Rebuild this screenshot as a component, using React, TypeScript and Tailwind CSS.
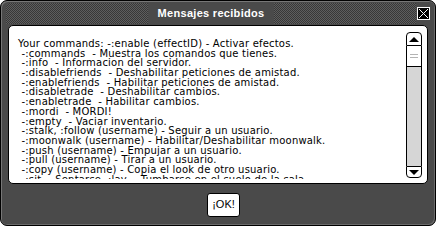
import type { ReactNode } from 'react'

const lines = [
  'Your commands: -:enable (effectID) - Activar efectos.',
  ' -:commands  - Muestra los comandos que tienes.',
  ' -:info  - Informacion del servidor.',
  ' -:disablefriends  - Deshabilitar peticiones de amistad.',
  ' -:enablefriends  - Habilitar peticiones de amistad.',
  ' -:disabletrade  - Deshabilitar cambios.',
  ' -:enabletrade  - Habilitar cambios.',
  ' -:mordi  - MORDI!',
  ' -:empty  - Vaciar inventario.',
  ' -:stalk, :follow (username) - Seguir a un usuario.',
  ' -:moonwalk (username) - Habilitar/Deshabilitar moonwalk.',
  ' -:push (username) - Empujar a un usuario.',
  ' -:pull (username) - Tirar a un usuario.',
  ' -:copy (username) - Copia el look de otro usuario.',
  ' -:sit  - Sentarse, :lay  - Tumbarse en el suelo de la sala.',
]

function ScrollButton({ children, top }: { children: ReactNode; top?: boolean }) {
  return (
    <div
      className={
        top
          ? 'flex h-[14px] items-center justify-center rounded-t-[4px] border border-black bg-white'
          : 'flex h-[12px] items-center justify-center rounded-b-[4px] border border-black bg-white'
      }
    >
      {children}
    </div>
  )
}

function Scrollbar() {
  return (
    <div className="mt-[6px] mb-[5px] mr-[5px] flex w-[16px] shrink-0 flex-col">
      <ScrollButton top>
        <div className="h-0 w-0 border-x-[5px] border-b-[5px] border-x-transparent border-b-black" />
      </ScrollButton>
      <div className="flex h-[20px] flex-col items-center justify-center gap-[2px] border-x border-black bg-white">
        <div className="h-px w-[8px] bg-[#b4b4b4]" />
        <div className="h-px w-[8px] bg-[#b4b4b4]" />
      </div>
      <div className="flex-1 border-x border-t border-black bg-[#d6d6d6]" />
      <ScrollButton>
        <div className="h-0 w-0 border-x-[5px] border-t-[5px] border-x-transparent border-t-black" />
      </ScrollButton>
    </div>
  )
}

export default function App() {
  return (
    <div className="h-[227px] w-[436px] bg-white font-['Liberation_Sans',Arial,sans-serif]">
      <div className="flex h-[226px] flex-col rounded-[7px] border border-black bg-[#4a4a4a] shadow-[inset_1px_1px_0_#777,inset_-1px_-1px_0_#6a6a6a]">
        <div className="mx-[5px] mt-[2px] flex h-[21px] items-center">
          <div className="h-full flex-1 rounded-tl-[5px] bg-[repeating-conic-gradient(#383838_0_25%,#5e5e5e_0_50%)] bg-[length:2px_2px]" />
          <div className="flex h-full items-center bg-[#4a4a4a] px-[10px] text-[11px] font-bold leading-none tracking-[0.3px] text-white">
            Mensajes recibidos
          </div>
          <div className="h-full flex-1 bg-[repeating-conic-gradient(#383838_0_25%,#5e5e5e_0_50%)] bg-[length:2px_2px]" />
          <div className="ml-[1px] flex h-[13px] w-[13px] items-center justify-center border border-white bg-black">
            <svg width="11" height="11" viewBox="0 0 11 11">
              <path d="M1 1 L10 10 M10 1 L1 10" stroke="white" strokeWidth="1" />
            </svg>
          </div>
        </div>
        <div className="mx-[7px] mt-px flex h-[159px] overflow-hidden rounded-[5px] border border-black bg-white">
          <div className="h-[153px] flex-1 self-start overflow-hidden pl-[9px] pt-[13px] font-['DejaVu_Sans',sans-serif] text-[10px] leading-[9.7px] tracking-[0.2px] text-black">
            {lines.map((line, i) => (
              <div key={i} className="h-[9.7px] whitespace-pre">
                {line}
              </div>
            ))}
          </div>
          <Scrollbar />
        </div>
        <div className="flex flex-1 items-center pl-[206px]">
          <button className="h-[24px] w-[33px] rounded-[3px] border border-black bg-white text-[11px] leading-none text-black">
            ¡OK!
          </button>
        </div>
      </div>
    </div>
  )
}
